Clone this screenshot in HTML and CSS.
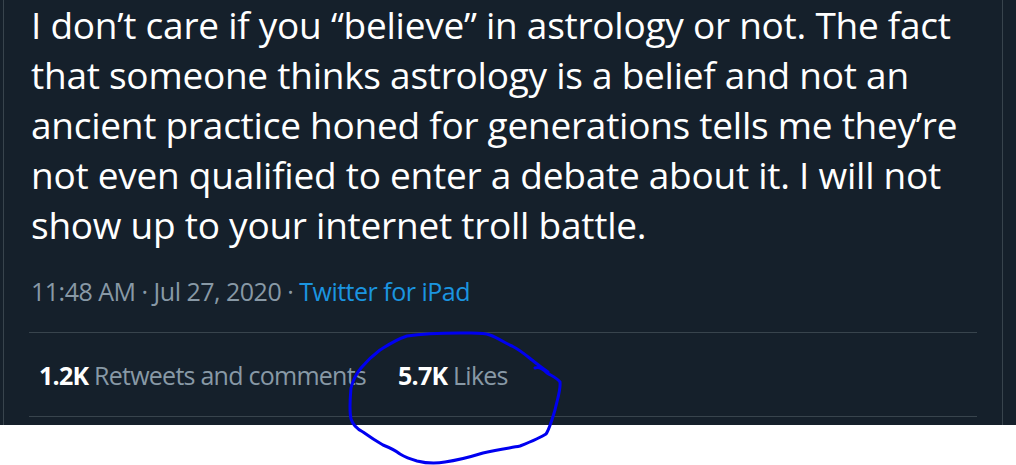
FILE: index.html
```html
<!DOCTYPE html>
<html>
<head>
<meta charset="utf-8">
<link rel="stylesheet" href="styles.css">
</head>
<body>
<div class="screen">
  <article class="tweet">
    <div class="tweet-text">
      <span class="line">I don’t care if you “believe” in astrology or not. The fact</span>
      <span class="line">that someone thinks astrology is a belief and not an</span>
      <span class="line">ancient practice honed for generations tells me they’re</span>
      <span class="line">not even qualified to enter a debate about it. I will not</span>
      <span class="line">show up to your internet troll battle.</span>
    </div>
    <div class="meta">11:48 AM · Jul 27, 2020 · <a class="source" href="#">Twitter for iPad</a></div>
    <div class="stats">
      <span class="stat"><b>1.2K</b> Retweets and comments</span>
      <span class="stat"><b>5.7K</b> Likes</span>
    </div>
  </article>
</div>
<svg class="scribble" width="1016" height="465" viewBox="0 0 1016 465">
  <path d="M535 368 C540 366 545 371 547 373 C552 376 557 378 560 382 C561 390 557 400 555 410 C552 420 549 430 546 434 C540 438 530 442 520 446 C510 448 500 449 483 453 C470 457 460 460 445 462 C435 464 425 463 417 461 C410 459 405 457 400 454 C395 450 388 447 383 445 C376 441 370 437 363 432 C357 429 353 425 351 419 C349 410 350 400 351 388 C353 380 356 374 361 368 C366 362 372 356 380 350 C388 345 395 340 407 336 C420 334 440 333 460 333 C472 333 483 332 490 335 C498 338 505 343 512 346 C520 350 527 356 532 360 C537 364 542 368 548 372" />
</svg>
</body>
</html>
```
FILE: styles.css
```css
html, body {
  margin: 0;
  padding: 0;
  background: #ffffff;
}
body {
  width: 1016px;
  height: 465px;
  overflow: hidden;
  position: relative;
  font-family: "Open Sans", "Noto Sans", sans-serif;
}
.screen {
  background: #15202b;
  height: 425px;
  width: 1016px;
  overflow: hidden;
}
.tweet {
  margin-left: 3px;
  width: 1000px;
  height: 425px;
  border-left: 1px solid #38444d;
  border-right: 1px solid #38444d;
  padding: 0 25px;
  box-sizing: border-box;
}
.tweet-text {
  color: #ffffff;
  font-size: 37px;
  line-height: 50px;
  letter-spacing: -0.25px;
  padding-left: 2px;
}
.line {
  display: block;
  white-space: nowrap;
}
.meta {
  color: #8899a6;
  font-size: 25px;
  letter-spacing: -0.5px;
  line-height: 34px;
  margin-top: 24px;
  padding-left: 2px;
  padding-bottom: 24px;
  border-bottom: 1px solid #38444d;
}
.source {
  color: #1b95e0;
  text-decoration: none;
}
.stats {
  display: flex;
  gap: 32px;
  height: 83px;
  align-items: center;
  padding-left: 10px;
  border-bottom: 1px solid #38444d;
  font-size: 25px;
  line-height: 34px;
  letter-spacing: -0.75px;
  color: #8899a6;
}
.stat b {
  color: #ffffff;
  font-weight: 700;
}
.scribble {
  position: absolute;
  left: 0;
  top: 0;
  pointer-events: none;
}
.scribble path {
  fill: none;
  stroke: #0000f0;
  stroke-width: 3;
  stroke-linecap: round;
  stroke-linejoin: round;
}
```
